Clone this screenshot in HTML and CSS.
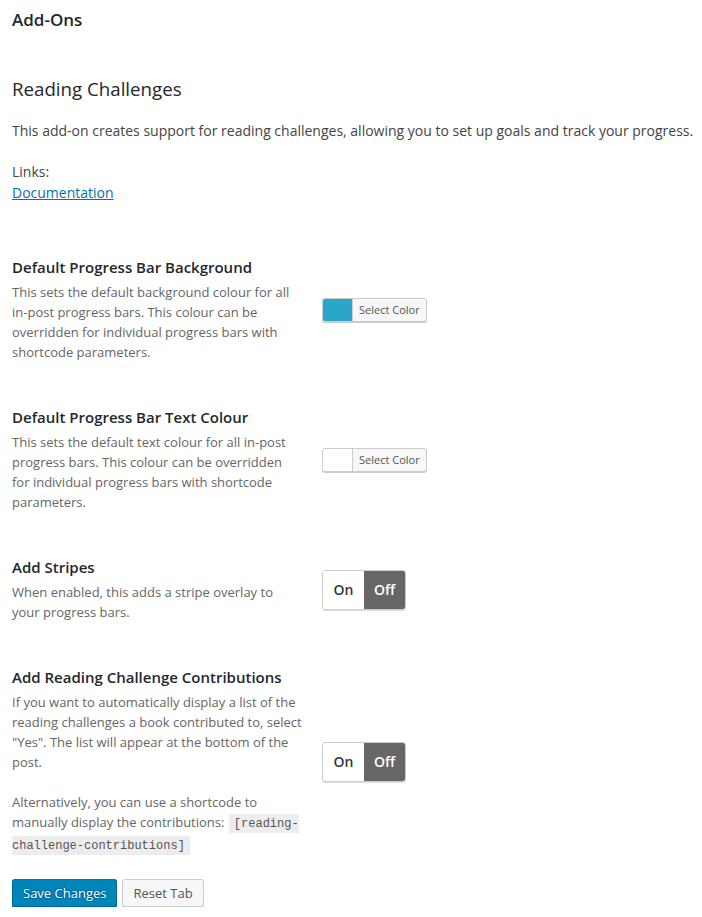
FILE: index.html
```html
<!DOCTYPE html>
<html lang="en">
<head>
<meta charset="utf-8">
<title>Add-Ons</title>
<link rel="stylesheet" href="styles.css">
</head>
<body>
<div class="wrap">
  <h1 class="page-title">Add-Ons</h1>
  <h2 class="section-title">Reading Challenges</h2>
  <p class="intro">This add-on creates support for reading challenges, allowing you to set up goals and track your progress.</p>
  <p class="links">Links:<br><a href="#">Documentation</a></p>

  <div class="settings">
    <div class="row">
      <div class="label">
        <h3 class="field-title">Default Progress Bar Background</h3>
        <p class="desc">This sets the default background colour for all in-post progress bars. This colour can be overridden for individual progress bars with shortcode parameters.</p>
      </div>
      <div class="control">
        <button class="color-result" type="button"><span class="swatch swatch-blue"></span><span class="color-text">Select Color</span></button>
      </div>
    </div>

    <div class="row">
      <div class="label">
        <h3 class="field-title">Default Progress Bar Text Colour</h3>
        <p class="desc">This sets the default text colour for all in-post progress bars. This colour can be overridden for individual progress bars with shortcode parameters.</p>
      </div>
      <div class="control">
        <button class="color-result" type="button"><span class="swatch swatch-white"></span><span class="color-text">Select Color</span></button>
      </div>
    </div>

    <div class="row">
      <div class="label">
        <h3 class="field-title">Add Stripes</h3>
        <p class="desc">When enabled, this adds a stripe overlay to your progress bars.</p>
      </div>
      <div class="control">
        <div class="toggle"><span class="opt">On</span><span class="opt active">Off</span></div>
      </div>
    </div>

    <div class="row">
      <div class="label">
        <h3 class="field-title">Add Reading Challenge Contributions</h3>
        <p class="desc">If you want to automatically display a list of the reading challenges a book contributed to, select "Yes". The list will appear at the bottom of the post.</p>
        <p class="desc desc-gap">Alternatively, you can use a shortcode to manually display the contributions: <code>[reading-challenge-contributions]</code></p>
      </div>
      <div class="control">
        <div class="toggle"><span class="opt">On</span><span class="opt active">Off</span></div>
      </div>
    </div>
  </div>

  <div class="actions">
    <button class="btn btn-primary" type="button">Save Changes</button>
    <button class="btn btn-secondary" type="button">Reset Tab</button>
  </div>
</div>
</body>
</html>
```

FILE: styles.css
```css
* { box-sizing: border-box; }

html, body {
  margin: 0;
  padding: 0;
  background: #fff;
}

body {
  font-family: "Open Sans", "Liberation Sans", sans-serif;
  color: #444;
  font-size: 14px;
}

.wrap {
  padding: 0 0 0 12px;
}

.page-title {
  margin: 8px 0 0;
  font-size: 17px;
  line-height: 23px;
  font-weight: 600;
  color: #23282d;
}

.section-title {
  margin: 45px 0 0;
  font-size: 18.7px;
  line-height: 26px;
  font-weight: 500;
  color: #23282d;
}

.intro {
  margin: 18px 0 0;
  font-size: 14px;
  line-height: 21px;
}

.links {
  margin: 20px 0 0;
  font-size: 14px;
  line-height: 21px;
}

.links a {
  color: #0073aa;
  text-decoration: underline;
}

.settings {
  margin-top: 32px;
}

.row {
  display: grid;
  grid-template-columns: 290px auto;
  column-gap: 20px;
  align-items: center;
  padding: 22px 0 23px;
}

.field-title {
  margin: 0;
  font-size: 15px;
  line-height: 20px;
  font-weight: 600;
  color: #23282d;
}

.desc {
  margin: 5px 0 0;
  font-size: 13px;
  line-height: 20px;
  color: #666;
}

.desc-gap {
  margin-top: 20px;
}

code {
  font-family: "Liberation Mono", monospace;
  font-size: 12px;
  padding: 3px 5px 2px;
  margin: 0 1px;
  background: rgba(0, 0, 0, 0.07);
  color: #555;
}

.control {
  display: flex;
  align-items: center;
}

.color-result {
  display: inline-flex;
  align-items: stretch;
  height: 24px;
  padding: 0;
  border: 1px solid #ccc;
  border-radius: 3px;
  background: #f7f7f7;
  box-shadow: 0 1px 0 #ccc;
  overflow: hidden;
  cursor: pointer;
  font-family: inherit;
}

.swatch {
  width: 30px;
  border-right: 1px solid #ccc;
}

.swatch-blue { background: #2ba6cb; }
.swatch-white { background: #fff; }

.color-text {
  display: flex;
  align-items: center;
  padding: 0 6px;
  font-size: 11px;
  color: #555;
}

.toggle {
  display: inline-flex;
  height: 40px;
  border: 1px solid #ccc;
  border-radius: 3px;
  overflow: hidden;
  box-shadow: 0 1px 0 #ddd;
}

.opt {
  width: 41px;
  display: flex;
  align-items: center;
  justify-content: center;
  font-size: 14px;
  font-weight: 600;
  color: #32373c;
  background: #fff;
}

.opt.active {
  background: #666;
  color: #fff;
}

.actions {
  display: flex;
  gap: 5px;
  margin-top: 0;
}

.btn {
  height: 28px;
  line-height: 26px;
  padding: 0 10px 1px;
  font-family: inherit;
  font-size: 13px;
  border-radius: 3px;
  border: 1px solid;
  cursor: pointer;
}

.btn-primary {
  background: #0085ba;
  border-color: #0073aa #006799 #006799;
  box-shadow: 0 1px 0 #006799;
  color: #fff;
  text-shadow: 0 -1px 1px #006799, 1px 0 1px #006799, 0 1px 1px #006799, -1px 0 1px #006799;
}

.btn-secondary {
  background: #f7f7f7;
  border-color: #ccc;
  box-shadow: 0 1px 0 #ccc;
  color: #555;
}
```
